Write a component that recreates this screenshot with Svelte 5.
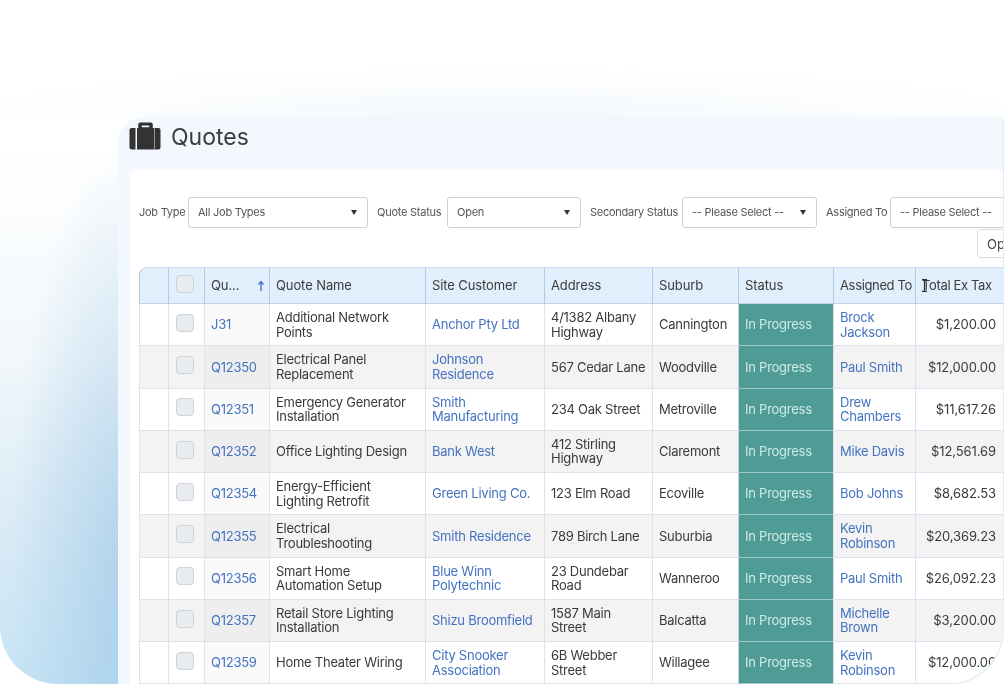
<script>
  const filters = [
    { label: 'Job Type', value: 'All Job Types', labelWidth: 46, width: 180 },
    { label: 'Quote Status', value: 'Open', labelWidth: 67, width: 134 },
    { label: 'Secondary Status', value: '-- Please Select --', labelWidth: 89, width: 135 },
    { label: 'Assigned To', value: '-- Please Select --', labelWidth: 61, width: 135 }
  ];

  const columns = ['Quote Name', 'Site Customer', 'Address', 'Suburb', 'Status', 'Assigned To'];

  const quotes = [
    { id: 'J31', name: 'Additional Network Points', customer: 'Anchor Pty Ltd', address: '4/1382 Albany Highway', suburb: 'Cannington', assigned: 'Brock Jackson', total: '$1,200.00' },
    { id: 'Q12350', name: 'Electrical Panel Replacement', customer: 'Johnson Residence', address: '567 Cedar Lane', suburb: 'Woodville', assigned: 'Paul Smith', total: '$12,000.00' },
    { id: 'Q12351', name: 'Emergency Generator Installation', customer: 'Smith Manufacturing', address: '234 Oak Street', suburb: 'Metroville', assigned: 'Drew Chambers', total: '$11,617.26' },
    { id: 'Q12352', name: 'Office Lighting Design', customer: 'Bank West', address: '412 Stirling Highway', suburb: 'Claremont', assigned: 'Mike Davis', total: '$12,561.69' },
    { id: 'Q12354', name: 'Energy-Efficient Lighting Retrofit', customer: 'Green Living Co.', address: '123 Elm Road', suburb: 'Ecoville', assigned: 'Bob Johns', total: '$8,682.53' },
    { id: 'Q12355', name: 'Electrical Troubleshooting', customer: 'Smith Residence', address: '789 Birch Lane', suburb: 'Suburbia', assigned: 'Kevin Robinson', total: '$20,369.23' },
    { id: 'Q12356', name: 'Smart Home Automation Setup', customer: 'Blue Winn Polytechnic', address: '23 Dundebar Road', suburb: 'Wanneroo', assigned: 'Paul Smith', total: '$26,092.23' },
    { id: 'Q12357', name: 'Retail Store Lighting Installation', customer: 'Shizu Broomfield', address: '1587 Main Street', suburb: 'Balcatta', assigned: 'Michelle Brown', total: '$3,200.00' },
    { id: 'Q12359', name: 'Home Theater Wiring', customer: 'City Snooker Association', address: '6B Webber Street', suburb: 'Willagee', assigned: 'Kevin Robinson', total: '$12,000.00' }
  ];
</script>

<div class="stage">
  <div class="glow"></div>
  <main class="panel">
    <header class="title">
      <svg class="case" viewBox="0 0 32 28" width="32" height="28" aria-hidden="true">
        <path d="M2.5 6H6.5V27.6H2.5A2 2 0 0 1 .5 25.6V8A2 2 0 0 1 2.5 6Z" />
        <path d="M25.5 6H29.5A2 2 0 0 1 31.5 8V25.6A2 2 0 0 1 29.5 27.6H25.5Z" />
        <path fill-rule="evenodd" d="M8 27.6V6H9.2V2.4A2 2 0 0 1 11.2.4H21.8A2 2 0 0 1 23.8 2.4V6H25V27.6ZM12.8 3.6V5.2H20.2V3.6Z" />
      </svg>
      <h1>Quotes</h1>
    </header>

    <section class="card">
      <div class="filters">
        {#each filters as f}
          <span class="label" style="width: {f.labelWidth}px">{f.label}</span>
          <div class="select" style="width: {f.width}px">
            <span>{f.value}</span>
            <i class="caret"></i>
          </div>
        {/each}
      </div>
      <div class="tools">
        <button>Options</button>
      </div>

      <table>
        <colgroup>
          <col style="width: 29px" />
          <col style="width: 36px" />
          <col style="width: 65px" />
          <col style="width: 156px" />
          <col style="width: 119px" />
          <col style="width: 108px" />
          <col style="width: 86px" />
          <col style="width: 95px" />
          <col style="width: 82px" />
          <col style="width: 88px" />
        </colgroup>
        <thead>
          <tr>
            <th></th>
            <th class="check"><span class="box"></span></th>
            <th>
              <div class="sort">
                <span>Qu...</span>
                <svg viewBox="0 0 8 12" width="8" height="12" aria-hidden="true">
                  <path d="M4 11V2M1.4 4.6 4 1.6 6.6 4.6" fill="none" stroke="#3a6fc0" stroke-width="1.3" />
                </svg>
              </div>
            </th>
            {#each columns as c}
              <th>{c}</th>
            {/each}
            <th class="total-head">
              Total Ex Tax
              <svg class="ibeam" viewBox="0 0 7 13" width="7" height="13" aria-hidden="true">
                <path d="M1 .6H6M3.5.6V12.4M1 12.4H6" fill="none" stroke="#333" stroke-width="1.2" />
              </svg>
            </th>
          </tr>
        </thead>
        <tbody>
          {#each quotes as q}
            <tr>
              <td></td>
              <td class="check"><span class="box"></span></td>
              <td class="idcell"><span class="link">{q.id}</span></td>
              <td>{q.name}</td>
              <td><span class="link">{q.customer}</span></td>
              <td>{q.address}</td>
              <td>{q.suburb}</td>
              <td class="status">In Progress</td>
              <td><span class="link">{q.assigned}</span></td>
              <td class="money">{q.total}</td>
            </tr>
          {/each}
        </tbody>
      </table>
    </section>
  </main>
</div>

<style>
  :global(body) {
    margin: 0;
    background: #fff;
  }

  .stage {
    position: relative;
    box-sizing: border-box;
    width: 1004px;
    height: 684px;
    padding-top: 118px;
    overflow: hidden;
    background: #fff;
    font-family: Inter, "Noto Sans", sans-serif;
    color: #3a3a3a;
    filter: blur(0.3px);
  }

  /* soft blue backdrop behind the panel, only its left strip and top edge show */
  .glow {
    position: absolute;
    left: 0;
    top: 0;
    width: 1004px;
    height: 684px;
    background:
      radial-gradient(560px 52px at 500px 118px, #f3f8fc, rgba(243, 248, 252, 0)) 0 0 / 100% 118px no-repeat,
      radial-gradient(120px 450px at 130px 590px, rgba(150, 195, 228, 0.62), rgba(150, 195, 228, 0)) 0 0 / 118px 100% no-repeat,
      linear-gradient(180deg, #fff 150px, #f1f7fb 360px, #dcecf6 510px, #c6e4f5 684px) 0 0 / 118px 100% no-repeat;
    border-bottom-left-radius: 58px;
  }

  .panel {
    position: relative;
    display: flex;
    flex-direction: column;
    margin-left: 118px;
    width: 885px;
    height: 566px;
    overflow: hidden;
    background: #f2f8fe;
    border-top-left-radius: 26px;
    border-bottom-right-radius: 56px;
    box-shadow: 1px 1px 0 #d8eefa, 0 -1px 0 #eaf7fb;
  }

  .title {
    display: flex;
    align-items: flex-start;
    gap: 10px;
    box-sizing: border-box;
    flex: none;
    height: 52px;
    padding: 4px 0 0 11px;
  }

  .case {
    fill: #333;
  }

  h1 {
    margin: 1px 0 0;
    font-size: 23px;
    line-height: 28px;
    font-weight: 400;
    color: #3c3c3c;
  }

  .card {
    box-sizing: border-box;
    flex: 1;
    margin-left: 12px;
    padding: 27px 0 0 9px;
    background: #fff;
    border-top-left-radius: 6px;
  }

  .filters {
    display: flex;
    align-items: center;
    width: 1000px;
    font-size: 11px;
    letter-spacing: -0.25px;
    color: #555;
  }

  .label {
    flex: none;
    margin-right: 3px;
    padding-bottom: 1px;
    white-space: nowrap;
  }

  .select {
    display: flex;
    align-items: center;
    justify-content: space-between;
    box-sizing: border-box;
    flex: none;
    height: 31px;
    margin-right: 9px;
    padding: 0 10px 1px 9px;
    border: 1px solid #d0d0d4;
    border-radius: 3px;
    background: #fff;
  }

  .caret {
    width: 0;
    height: 0;
    border-left: 3px solid transparent;
    border-right: 3px solid transparent;
    border-top: 5px solid #333;
  }

  .tools {
    display: flex;
    justify-content: flex-end;
    width: 918px;
    height: 38px;
    margin-top: 1px;
  }

  button {
    box-sizing: border-box;
    width: 80px;
    height: 29px;
    padding: 0 0 0 9px;
    text-align: left;
    font: 13px Inter, "Noto Sans", sans-serif;
    color: #444;
    background: #fff;
    border: 1px solid #dcdcdf;
    border-radius: 3px;
  }

  table {
    table-layout: fixed;
    width: 864px;
    border-collapse: separate;
    border-spacing: 0;
    font-size: 13px;
    line-height: 14.5px;
  }

  th {
    height: 37px;
    box-sizing: border-box;
    padding: 0 6px;
    text-align: left;
    font-weight: 400;
    letter-spacing: -0.1px;
    white-space: nowrap;
    color: #3c3c3c;
    background: #e1eefc;
    border-top: 1px solid #cfdeee;
    border-bottom: 1px solid #bdd0e4;
    border-left: 1px solid #b4c8e0;
  }

  th:nth-child(9),
  th:nth-child(10) {
    letter-spacing: -0.35px;
  }

  th:first-child {
    border-top-left-radius: 8px;
  }

  td {
    height: 42.25px;
    box-sizing: border-box;
    padding: 0 6px;
    letter-spacing: -0.25px;
    border-bottom: 1px solid #dde3ee;
    border-left: 1px solid #dde3ee;
    color: #3a3a3a;
  }

  tbody tr:nth-child(even) td {
    background: #f3f3f3;
  }

  .check {
    text-align: center;
    padding: 0 3px 0 0;
  }

  .box {
    display: inline-block;
    vertical-align: middle;
    box-sizing: border-box;
    width: 18px;
    height: 18px;
    margin-top: -6px;
    background: #e9ecef;
    border: 1px solid #cfd3d8;
    border-radius: 4px;
  }

  .sort {
    display: flex;
    align-items: center;
    justify-content: space-between;
    margin-right: -2px;
  }

  .idcell {
    background: #fafafa;
  }

  tbody tr:nth-child(even) .idcell {
    background: #eeeeee;
  }

  .link {
    color: #4472c0;
  }

  td.status,
  tbody tr:nth-child(even) td.status {
    color: #cfeae5;
    background: #4f9c96;
    border-bottom: 1px solid #9cc9c4;
    border-left: 1px solid #c3d3e6;
  }

  td.money {
    padding-right: 7px;
    letter-spacing: -0.1px;
    text-align: right;
    white-space: nowrap;
  }

  .total-head {
    position: relative;
  }

  .ibeam {
    position: absolute;
    left: 5px;
    top: 11px;
  }
</style>
